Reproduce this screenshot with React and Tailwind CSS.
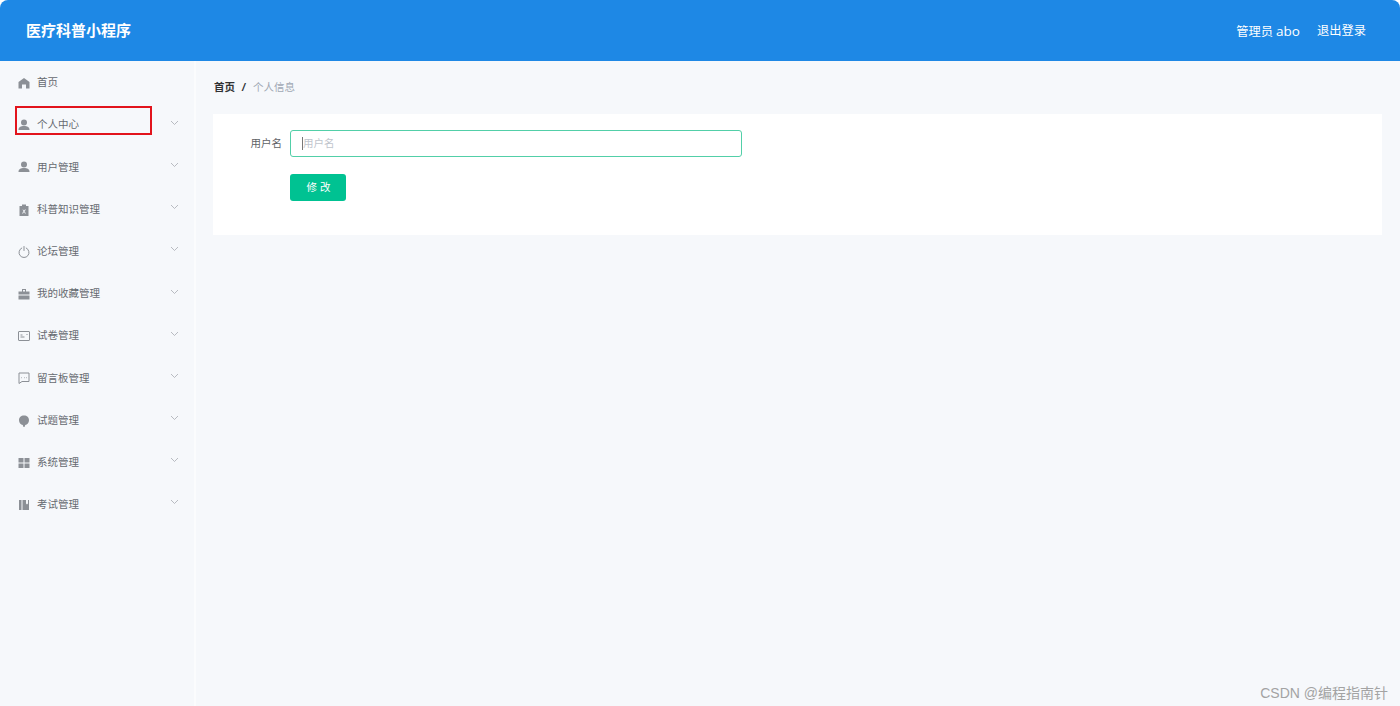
import React from "react";

const I = ({ children, fill = "#8c9096", stroke = "none" }) => (
  <svg width="12" height="12" viewBox="0 0 24 24" fill={fill} stroke={stroke} strokeWidth={stroke === "none" ? 0 : 2} className="shrink-0">
    {children}
  </svg>
);

const Home = () => <I><path d="M12 2 1 10v13h7v-8h8v8h7V10z" /></I>;
const User = () => <I><ellipse cx="12" cy="7" rx="6" ry="6" /><path d="M1 22c0-6 4-8 11-8s11 2 11 8z" /></I>;
const Clip = () => (
  <I>
    <path fillRule="evenodd" d="M8 1h8v3h5v20H3V4h5zm1 10 2 3.500-3 4.500h2l2-3 2 3h2l-3-4.500 3-3.500h-2l-2 2-2-2z" />
  </I>
);
const Power = () => (
  <I fill="none" stroke="#8c9096">
    <path d="M16.500 4a10 10 0 1 1-9 0" strokeLinecap="round" />
    <path d="M12 1v8" strokeLinecap="round" />
  </I>
);
const Case = () => <I><path d="M8 2h8v5h7v6H1V7h7zm2 2v3h4V4zM1 15h22v8H1z" /></I>;
const Card = () => (
  <I fill="none" stroke="#8c9096">
    <rect x="1" y="3" width="22" height="18" rx="1" />
    <path d="M5 14h8M5 10h4M17 9h2" />
  </I>
);
const Chat = () => (
  <I fill="none" stroke="#8c9096">
    <path d="M2 2h20v17H8l-6 4z" strokeLinejoin="round" />
    <path d="M7 11h1M12 11h1M16 11h1" strokeWidth="2.500" />
  </I>
);
const Bulb = () => <I><path d="M12 1c-6 0-10 4-10 9.500 0 5 3.500 8.500 7.500 9.500L11 24h2l1.500-4c4-1 7.500-4.500 7.500-9.500C22 5 18 1 12 1z" /></I>;
const Grid = () => <I><path d="M1 2h10v9H1zM13 2h10v9H13zM1 13h10v9H1zM13 13h10v9H13z" /></I>;
const Book = () => <I><path d="M2 2h5v20H2zM9 2h7v9l2-2 2 2V2h2v20H9z" /></I>;

const Chevron = () => (
  <svg width="9" height="6" viewBox="0 0 9 6" fill="none" stroke="#a8abb2" strokeWidth="0.800" className="shrink-0 -mt-[5px]">
    <path d="M1 1l3.500 3.500L8 1" />
  </svg>
);

const items = [
  ["首页", Home, false],
  ["个人中心", User, true],
  ["用户管理", User, true],
  ["科普知识管理", Clip, true],
  ["论坛管理", Power, true],
  ["我的收藏管理", Case, true],
  ["试卷管理", Card, true],
  ["留言板管理", Chat, true],
  ["试题管理", Bulb, true],
  ["系统管理", Grid, true],
  ["考试管理", Book, true],
];

export default function App() {
  return (
    <div
      className="relative h-[706px] w-[1400px] overflow-hidden bg-white"
      style={{ fontFamily: '"Liberation Sans", "Noto Sans CJK SC", sans-serif' }}
    >
      <header className="flex h-[61px] items-center justify-between rounded-t-lg bg-[#1e88e5] pl-[26px] pr-[34px] pt-px text-white">
        <div className="text-[15px] font-bold">医疗科普小程序</div>
        <div className="flex items-center gap-[17px] text-[12.250px]">
          <span style={{ fontFamily: '"Open Sans", "Noto Sans CJK SC", sans-serif' }}>
            管理员 <span className="text-[13.500px]">abo</span>
          </span>
          <span>退出登录</span>
        </div>
      </header>
      <div className="flex h-[645px]">
        <aside className="w-[196px] shrink-0 border-r-2 border-[#fbfcfd] bg-[#f6f8fb] pl-[18px] pr-[15px] pt-px">
          {items.map(([name, Icon, arrow]) => (
            <div key={name} className="flex h-[42.200px] items-center text-[10.500px] text-[#666a70]">
              <Icon />
              <span className="ml-[7px] flex-1">{name}</span>
              {arrow && <Chevron />}
            </div>
          ))}
        </aside>
        <main className="flex-1 bg-[#f6f8fb] pl-[17px] pr-[18px]">
          <nav className="flex h-[53px] items-center pl-px text-[10.500px]">
            <span className="font-bold text-[#303133]">首页</span>
            <span className="ml-[7px] mr-[8px] text-[11px] font-bold italic text-[#303133]">/</span>
            <span className="text-[#a0a8b4]">个人信息</span>
          </nav>
          <section className="h-[121px] bg-white pt-4">
            <div className="flex items-center">
              <label className="w-[69px] text-right text-[10.500px] text-[#606266]">用户名</label>
              <div className="ml-2 flex h-[27px] w-[452px] items-center rounded-[3px] border border-[#52cfa8] bg-white pl-[11px] text-[10.500px] text-[#c0c4cc]">
                <span className="h-[13px] w-px bg-[#777]" />
                用户名
              </div>
            </div>
            <button className="ml-[77px] mt-[17px] block h-[27px] w-[56px] rounded-[3px] bg-[#00c292] pl-px text-[10.500px] text-white">
              修 改
            </button>
          </section>
        </main>
      </div>
      <div className="absolute left-[15px] top-[106px] h-[29px] w-[137px] border-2 border-[#e2141c]" />
      <div className="absolute right-[12px] top-[683px] text-[14px] text-[#a3a3a3]">CSDN @编程指南针</div>
    </div>
  );
}
